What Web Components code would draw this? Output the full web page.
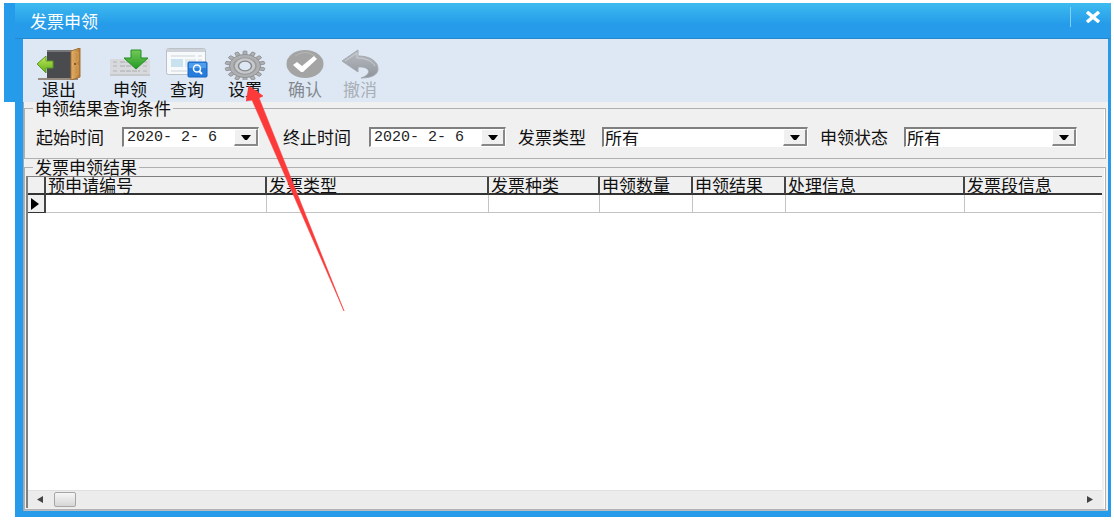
<!DOCTYPE html>
<html lang="zh-CN">
<head>
<meta charset="utf-8">
<title>发票申领</title>
<style>
  html { background: #fff; }
  body {
    margin: 0; min-height: 100vh; box-sizing: border-box; padding: 3px 3px 7px 4px;
    display: flex; position: relative; color: #101010;
    font-family: "Noto Sans CJK SC", sans-serif; font-size: 17px; line-height: 20px;
  }
  .backdrop { width: 11px; height: 99px; background: #259be9; flex: none; }
  app-window { flex: 1; min-width: 0; }
</style>
</head>
<body>
<div class="backdrop"></div>
<app-window heading="发票申领">
  <tool-bar slot="tools">
    <tool-button label="退出"><svg width="44" height="32" viewBox="0 0 44 32">
      <defs><linearGradient id="wood" x2="1"><stop stop-color="#e7b874"/><stop offset="1" stop-color="#b27935"/></linearGradient><linearGradient id="gr" x2="0" y2="1"><stop stop-color="#c4ea57"/><stop offset="1" stop-color="#5dab1c"/></linearGradient></defs>
      <path d="M1 30h40v2H1z" fill="#978c80"/><path d="M10 2h26v28H10z" fill="#4a4b4e"/><path d="M10 2h26v2H10z" fill="#77787a"/>
      <path d="M34 3 43 0v29l-9 3z" fill="url(#wood)" stroke="#a56e31"/><path d="M36 5.500 41 4v9l-5 1.500zM36 18l5-1v9l-5 2z" fill="none" stroke="#d99d50"/><circle cx="38" cy="16" r="1" fill="#70451c"/>
      <path d="M0 16 9 8v5h7v7H9v5z" fill="url(#gr)" stroke="#589c27"/></svg></tool-button>
    <tool-button label="申领"><svg width="40" height="32" viewBox="0 0 40 32">
      <defs><linearGradient id="dn" x2="0" y2="1"><stop stop-color="#75c857"/><stop offset="1" stop-color="#219b24"/></linearGradient></defs>
      <path d="M0 11h40v17H0z" fill="#d7d9dc"/><path d="M0 27h40" stroke="#b5b8bb"/><path d="M3 14h4m-4 4h4m-4 5h4m26-9h4m-4 4h4m-4 5h4" stroke="#b4b4b4"/><path d="M10 14h9m-9 4h13m-13 5h20" stroke="#aaa" stroke-dasharray="5 1"/>
      <path d="M21 2h10v8h7L26 21 14 10h7z" fill="url(#dn)" stroke="#238f27"/></svg></tool-button>
    <tool-button label="查询"><svg width="42" height="32" viewBox="0 0 42 32">
      <rect x=".5" y=".5" width="39" height="26" rx="2" fill="#f7f9fa" stroke="#bac1c7"/><path d="M1 1h38v3H1z" fill="#ccd2d8"/><path d="M5 8h24M5 23h16M32 8h4M32 12h4" stroke="#ccd5dc"/><path d="M5 11h12v8H5z" fill="#c8e3ef"/><path d="M19 11h11v8H19z" fill="#dfe9ee"/>
      <rect x="22" y="14" width="19" height="15" rx="1" fill="#287cdc" stroke="#1766c5"/><path d="M23 15h17v5H23z" fill="#4f9eed"/><circle cx="31" cy="20.500" r="3.500" fill="none" stroke="#fff" stroke-width="1.500"/><path d="m33 23 3 3" stroke="#fff" stroke-width="2"/></svg></tool-button>
    <tool-button label="设置" id="settings"></tool-button>
    <tool-button label="确认" off="confirm"><svg width="38" height="32" viewBox="0 0 38 32">
      <ellipse cx="19" cy="16" rx="18.500" ry="14" fill="#a4a4a4"/><path d="M9 8q10-7 20 0" stroke="#b6b6b6" fill="none"/><path d="M7 17 11 14l5 4L28 8l3 3L17 24h-2z" fill="#fff"/></svg></tool-button>
    <tool-button label="撤消" off="undo"><svg width="38" height="32" viewBox="0 0 38 32">
      <defs><linearGradient id="ug" x2="0" y2="1"><stop stop-color="#b9bdc3"/><stop offset="1" stop-color="#8f949b"/></linearGradient></defs><path d="M1 13 17 2v6c13 0 20 6 20 13 0 6-7 9-17 9 12-4 9-12-3-11v5z" fill="url(#ug)" stroke="#a5aab0"/><path d="m4 13 12-8v5c9 0 15 3 18 8" fill="none" stroke="#cbd0d5"/></svg></tool-button>
  </tool-bar>
  <group-box heading="申领结果查询条件">
    <query-form>
      <form-field kind="date" label="起始时间" value="2020- 2- 6"></form-field>
      <form-field kind="date" label="终止时间" value="2020- 2- 6"></form-field>
      <form-field kind="select" label="发票类型" value="所有" style="flex:290"></form-field>
      <form-field kind="select" label="申领状态" value="所有" style="flex:257"></form-field>
    </query-form>
  </group-box>
  <group-box heading="发票申领结果" fill>
    <result-grid></result-grid>
  </group-box>
</app-window>
<pointer-arrow></pointer-arrow>

<script>
function define(name, html, setup) {
  const t = document.createElement('template');
  t.innerHTML = html;
  customElements.define(name, class extends HTMLElement {
    constructor() { super(); this.attachShadow({ mode: 'open' }).append(t.content.cloneNode(true)); }
    connectedCallback() { if (setup && !this.ready) { this.ready = true; setup(this, this.shadowRoot); } }
  });
}

define('app-window', `<style>
  :host { display: flex; flex-direction: column; box-sizing: border-box; border: solid #259be9; border-width: 0 3px 6px 8px; background: #f0f0f0; box-shadow: inset 1px 0 #9ea9b2, inset 0 -1px #b7bec3; position: relative; }
  header { display: flex; align-items: center; height: 36px; margin: 0 -3px 0 -8px; padding: 0 7px 0 15px; background: linear-gradient(#3dbbf0, #259be9 60%); box-sizing: border-box; color: #fff; box-shadow: inset 0 -1px #2389cf; }
  h1 { flex: 1; margin: 0; font-size: 17px; line-height: 20px; font-weight: 400; }
  button { border: 0; border-left: 1px solid #80d1f5; background: none; height: 20px; padding: 0 0 0 14px; margin-bottom: 8px; display: flex; align-items: center; width: 34px; }
  main { flex: 1; display: flex; flex-direction: column; gap: 3px; padding: 1px 2px 1px 1px; }
  </style><header><h1></h1><button aria-label="关闭"><svg width="16" height="12" viewBox="0 0 16 12"><path d="m2 1 12 10M14 1 2 11" stroke="#fff" stroke-width="3.500"/></svg></button></header>
  <slot name="tools"></slot><main><slot></slot></main>`,
  (h, r) => r.querySelector('h1').textContent = h.getAttribute('heading'));

define('tool-bar', `<style>
  :host { display: grid; grid-template-columns: 72px 70px 44px 72px 48px 62px; justify-items: center; height: 63px; box-sizing: border-box; padding-top: 9px; background: #dde8f4; }
  </style><slot></slot>`);

define('tool-button', `<style>
  :host { display: block; }
  button { border: 0; background: none; padding: 0; font: inherit; color: inherit; display: flex; flex-direction: column; align-items: center; }
  button:disabled { color: #85898f; }
  :host([off=undo]) button { color: #a9afb7; }
  .icon { height: 32px; } span { line-height: 18px; }
  </style><button><div class="icon"><slot></slot></div><span></span></button>`,
  (h, r) => {
    r.querySelector('span').textContent = h.getAttribute('label');
    r.querySelector('button').disabled = h.hasAttribute('off');
    if (h.id === 'settings') {
      let teeth = '';
      for (let i = 0; i < 14; i++) teeth += `<rect x="-2" y="-20" width="4" height="7" rx="1" transform="rotate(${i * 360 / 14})"/>`;
      h.innerHTML = `<svg width="42" height="32" viewBox="0 0 42 32"><g transform="translate(21 18) scale(1 .75)" fill="#aeb0b2" stroke="#85878a" stroke-width=".8">${teeth}<circle r="15.500"/><circle r="11" fill="#c6c8ca" stroke="#96989b" stroke-width="1.500"/><circle r="6.500" fill="#dde8f4" stroke="#85878a" stroke-width="1.500"/></g></svg>`;
    }
  });

define('group-box', `<style>
  :host { display: block; } :host([fill]) { flex: 1; display: flex; }
  fieldset { flex: 1; min-width: 0; margin: 0; border: 1px solid #b0b0b0; padding: 0; box-shadow: inset -1px 0 #fff; display: flex; box-sizing: border-box; }
  legend { margin-left: 8px; padding: 0 2px; line-height: 10px; height: 10px; }
  ::slotted(*) { flex: 1; min-width: 0; }
  </style><fieldset><legend></legend><slot></slot></fieldset>`,
  (h, r) => r.querySelector('legend').textContent = h.getAttribute('heading'));

define('query-form', `<style>
  :host { display: flex; gap: 12px; padding: 14px 28px 11px 11px; }
  ::slotted([kind=date]) { flex: none; }
  ::slotted(:first-child) { margin-right: 12px; }
  </style><slot></slot>`);

define('form-field', `<style>
  :host { display: flex; align-items: center; gap: 16px; min-width: 0; }
  :host([kind=date]) { gap: 18px; }
  label { flex: none; line-height: 20px; }
  .box { position: relative; display: flex; flex: 1; min-width: 0; height: 20px; box-sizing: border-box; border: 1px solid #fff; border-top: 2px solid #808080; border-left: 2px solid #808080; background: #fff; }
  :host([kind=date]) .box { flex: none; width: 137px; }
  input { flex: 1; min-width: 0; border: 0; outline: 0; padding: 0 0 0 3px; background: none; font: 15px/17px "Liberation Mono", monospace; color: #222; white-space: pre; }
  select { appearance: none; flex: 1; min-width: 0; border: 0; outline: 0; padding: 0 24px 0 1px; background: none; font: inherit; line-height: 17px; color: inherit; }
  .drop { width: 24px; padding: 0; border: 2px solid #888; border-top: 1px solid #fff; border-left: 1px solid #fff; background: #f0f0f0; display: flex; align-items: center; justify-content: center; box-sizing: border-box; }
  span.drop { position: absolute; right: 0; top: 0; bottom: 0; pointer-events: none; }
  </style><label for="c"></label><div class="box"></div>`,
  (h, r) => {
    const label = h.getAttribute('label'), value = h.getAttribute('value');
    const arrow = '<svg width="10" height="5" viewBox="0 0 10 5"><path d="M0 0h10L6 5H4z"/></svg>';
    r.querySelector('label').textContent = label;
    r.querySelector('.box').innerHTML = h.getAttribute('kind') === 'date'
      ? `<input id="c" value="${value}"><button class="drop" aria-label="${label}">${arrow}</button>`
      : `<select id="c"><option>${value}</option></select><span class="drop">${arrow}</span>`;
  });

define('result-grid', `<style>
  :host { display: flex; flex-direction: column; margin: 4px 3px 1px 1px; border: solid #808080; border-width: 1px 0 0 2px; background: #fff; }
  .view { flex: 1; }
  table { width: 100%; table-layout: fixed; border-collapse: separate; border-spacing: 0; }
  th, td { box-sizing: border-box; height: 18px; padding: 0 0 0 2px; text-align: left; font-weight: 400; line-height: 16px; white-space: nowrap; }
  th { background: #f0f0f0; border-right: 2px solid #444; border-bottom: 2px solid #333; }
  td { border-right: 1px solid #c4c4c4; border-bottom: 1px solid #c4c4c4; }
  th:last-child, td:last-child { border-right-width: 0; }
  tbody th { border-bottom-width: 1px; }
  svg { display: block; }
  </style><div class="view"><table>
  <colgroup><col style="width:18px"><col style="width:221px"><col style="width:222px"><col style="width:111px"><col style="width:93px"><col style="width:93px"><col style="width:179px"><col></colgroup>
  <thead><tr><th></th><th>预申请编号</th><th>发票类型</th><th>发票种类</th><th>申领数量</th><th>申领结果</th><th>处理信息</th><th>发票段信息</th></tr></thead>
  <tbody><tr><th><svg width="10" height="12" viewBox="0 0 10 12"><path d="M1 0 9 6 1 12z"/></svg></th><td></td><td></td><td></td><td></td><td></td><td></td><td></td></tr></tbody>
  </table></div><scroll-strip></scroll-strip>`);

define('scroll-strip', `<style>
  :host { display: flex; align-items: center; height: 18px; background: #ececec; border-top: 1px solid #e0e0e0; box-sizing: border-box; }
  button { border: 0; background: none; padding: 0; width: 24px; height: 17px; display: flex; align-items: center; justify-content: center; }
  .thumb { width: 22px; height: 15px; margin-left: 2px; box-sizing: border-box; border: 1px solid #a6a6a6; border-radius: 2px; background: linear-gradient(#f6f6f6, #d6d6d6); }
  .track { flex: 1; }
  </style><button aria-label="向左"><svg width="6" height="7" viewBox="0 0 6 7"><path d="M6 0v7L0 3.500z" fill="#444"/></svg></button><div class="track"><div class="thumb"></div></div><button aria-label="向右"><svg width="6" height="7" viewBox="0 0 6 7"><path d="M0 0v7l6-3.500z" fill="#444"/></svg></button>`);

define('pointer-arrow', `<style>
  :host { position: absolute; left: 246px; top: 86px; pointer-events: none; } svg { display: block; }
  </style><svg width="99" height="226" viewBox="0 0 99 226"><path d="M3 0 17 10 13 12 98 225 6 14 0 15z" fill="#fc3a3a" stroke="#fc3a3a" stroke-width=".6"/></svg>`);
</script>
</body>
</html>
